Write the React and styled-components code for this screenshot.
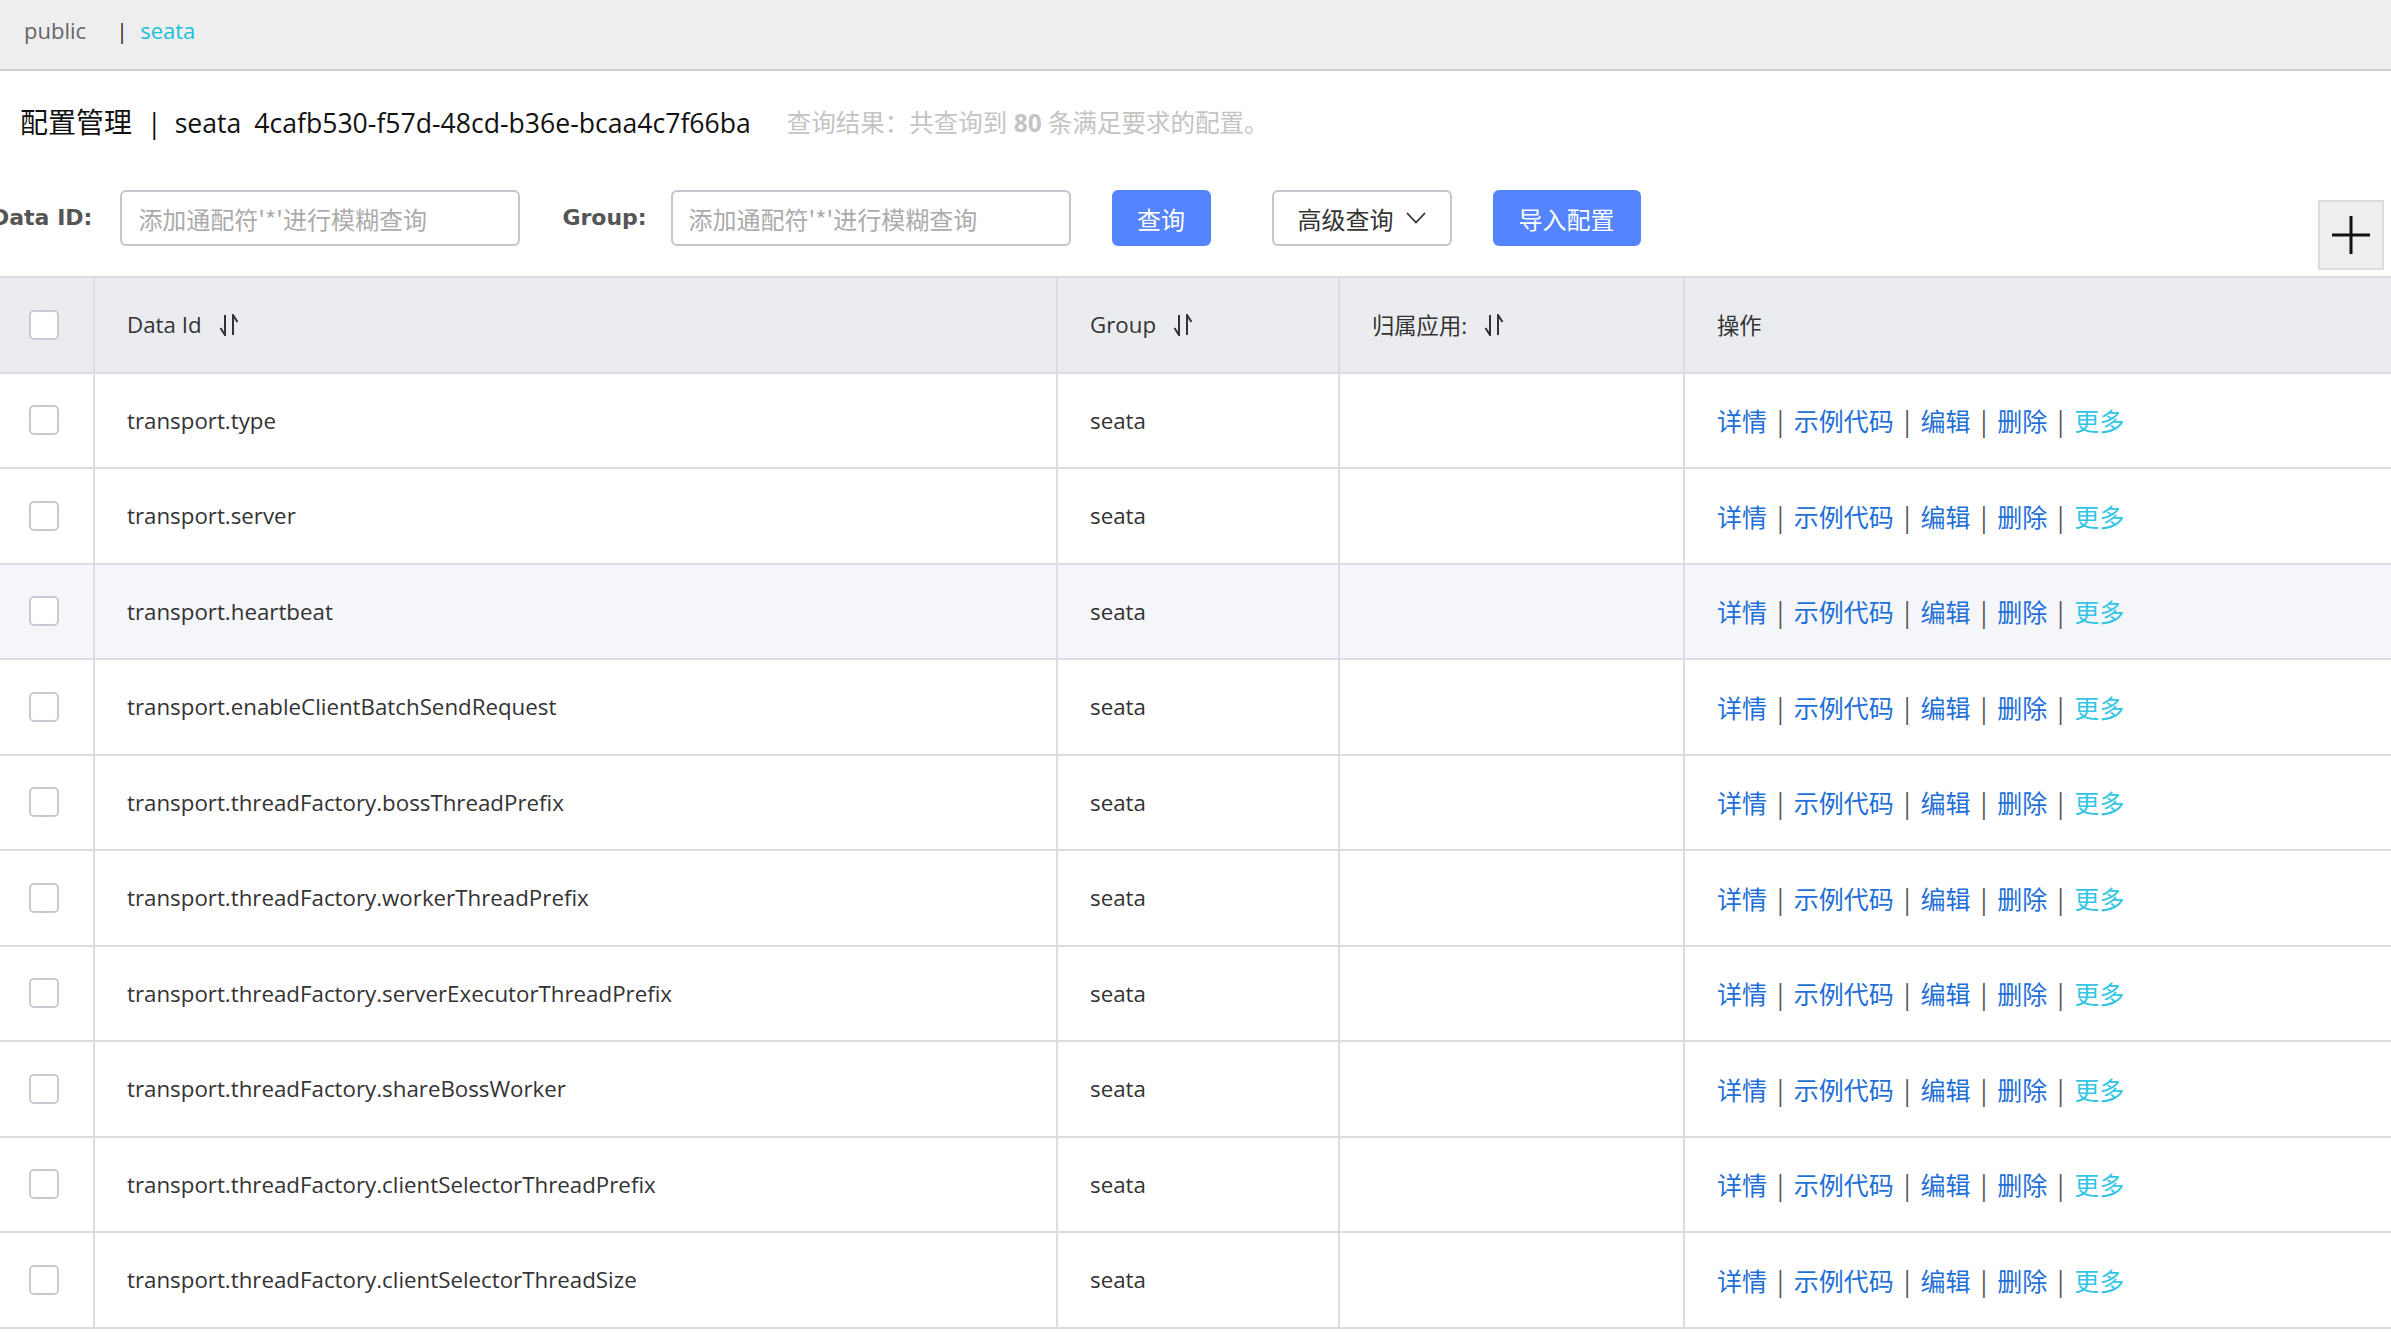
import React from 'react'
import styled, { createGlobalStyle } from 'styled-components'

const rows = [
  'transport.type',
  'transport.server',
  'transport.heartbeat',
  'transport.enableClientBatchSendRequest',
  'transport.threadFactory.bossThreadPrefix',
  'transport.threadFactory.workerThreadPrefix',
  'transport.threadFactory.serverExecutorThreadPrefix',
  'transport.threadFactory.shareBossWorker',
  'transport.threadFactory.clientSelectorThreadPrefix',
  'transport.threadFactory.clientSelectorThreadSize',
]

const actions = ['详情', '示例代码', '编辑', '删除', '更多']

function SortIcon() {
  return (
    <svg width="20" height="22" viewBox="0 0 20 22" fill="none" stroke="#333" strokeWidth="2">
      <path d="M6 1 V21 L1.5 14" />
      <path d="M14 21 V1 L18.5 8" />
    </svg>
  )
}

function App() {
  return (
    <Page>
      <GlobalStyle />
      <TopBar>
        <Crumb>public</Crumb>
        <Divider>|</Divider>
        <Crumb $active>seata</Crumb>
      </TopBar>

      <TitleRow>
        <Title>
          <TitleCn>配置管理</TitleCn>
          <TitleSep>|</TitleSep>seata<Uuid>4cafb530-f57d-48cd-b36e-bcaa4c7f66ba</Uuid>
        </Title>
        <Result>
          查询结果：共查询到 <strong>80</strong> 条满足要求的配置。
        </Result>
      </TitleRow>

      <SearchBar>
        <Label $first>Data ID:</Label>
        <Input placeholder="添加通配符'*'进行模糊查询" />
        <Label>Group:</Label>
        <Input placeholder="添加通配符'*'进行模糊查询" />
        <Button $primary $w={99}>查询</Button>
        <Button $w={180} $gap={61}>
          高级查询
          <svg width="20" height="12" viewBox="0 0 20 12" fill="none" stroke="#333" strokeWidth="1.8">
            <polyline points="1,1 10,10.5 19,1" />
          </svg>
        </Button>
        <Button $primary $w={148}>导入配置</Button>
        <AddButton>
          <svg width="42" height="42" viewBox="0 0 42 42" stroke="#111" strokeWidth="3">
            <line x1="21" y1="2" x2="21" y2="40" />
            <line x1="2" y1="21" x2="40" y2="21" />
          </svg>
        </AddButton>
      </SearchBar>

      <Table>
        <Row $head>
          <CheckCell><Checkbox /></CheckCell>
          <Cell>Data Id<SortIcon /></Cell>
          <Cell>Group<SortIcon /></Cell>
          <Cell>归属应用:<SortIcon /></Cell>
          <Cell $last>操作</Cell>
        </Row>
        {rows.map((id, i) => (
          <Row key={id} $hover={i === 2}>
            <CheckCell><Checkbox /></CheckCell>
            <Cell>{id}</Cell>
            <Cell>seata</Cell>
            <Cell />
            <Cell $last>
              <Actions>
                {actions.map((a, j) => (
                  <React.Fragment key={a}>
                    {j > 0 && <Sep>|</Sep>}
                    <Link $more={a === '更多'}>{a}</Link>
                  </React.Fragment>
                ))}
              </Actions>
            </Cell>
          </Row>
        ))}
      </Table>
    </Page>
  )
}

export default App

const GlobalStyle = createGlobalStyle`
  html, body {
    margin: 0;
    padding: 0;
    background: #fff;
    overflow: hidden;
  }
  * { box-sizing: border-box; }
`

const Page = styled.div`
  width: 2391px;
  height: 1332px;
  overflow: hidden;
  font-family: "Open Sans", "Noto Sans CJK SC", sans-serif;
  color: #333;
`

const TopBar = styled.div`
  height: 71px;
  background: #eeeeee;
  border-bottom: 2px solid #cfcfd1;
  display: flex;
  align-items: center;
  padding: 0 0 9px 24px;
  font-size: 22px;
`

const Crumb = styled.span`
  color: ${p => (p.$active ? '#1bc0da' : '#666')};
`

const Divider = styled.span`
  color: #333;
  margin: 0 12px 0 30px;
`

const TitleRow = styled.div`
  height: 100px;
  display: flex;
  align-items: center;
  padding-left: 20px;
`

const Title = styled.h1`
  margin: 0;
  font-weight: 400;
  font-size: 26.6px;
  color: #111;
`

const TitleCn = styled.span`
  font-size: 28px;
`

const TitleSep = styled.span`
  margin: 0 13px 0 15px;
`

const Uuid = styled.span`
  margin-left: 13px;
`

const Result = styled.span`
  margin-left: 36px;
  font-size: 24.5px;
  color: #c4c4c4;

  strong {
    font-weight: 700;
  }
`

const SearchBar = styled.div`
  height: 105px;
  display: flex;
  align-items: flex-start;
  padding-top: 19px;
`

const Label = styled.label`
  font-family: "DejaVu Sans", sans-serif;
  font-weight: 700;
  font-size: 22px;
  color: #555;
  line-height: 56px;
  white-space: nowrap;
  margin-left: ${p => (p.$first ? '-9px' : '42px')};
  margin-right: ${p => (p.$first ? '28px' : '24px')};
`

const Input = styled.input`
  width: 400px;
  height: 56px;
  border: 2px solid #c4c6cf;
  border-radius: 6px;
  padding: 0 16px;
  font-family: "Noto Sans CJK SC", sans-serif;
  font-size: 24px;
  outline: none;

  &::placeholder {
    color: #ababab;
  }
`

const Button = styled.button`
  width: ${p => p.$w}px;
  height: 56px;
  margin-left: ${p => p.$gap || 41}px;
  border-radius: 6px;
  border: 2px solid ${p => (p.$primary ? '#5584ff' : '#c4c6cf')};
  background: ${p => (p.$primary ? '#5584ff' : '#fff')};
  color: ${p => (p.$primary ? '#fff' : '#333')};
  font-family: "Noto Sans CJK SC", sans-serif;
  font-size: 24px;
  display: flex;
  align-items: center;
  justify-content: center;
  gap: 12px;
  padding: 0;
`

const AddButton = styled.div`
  margin-left: auto;
  margin-right: 7px;
  margin-top: 10px;
  width: 66px;
  height: 70px;
  background: #eeeeee;
  border: 2px solid #dcdcdc;
  display: flex;
  align-items: center;
  justify-content: center;
`

const Table = styled.div`
  border-top: 2px solid #dcdde2;
`

const Row = styled.div`
  display: grid;
  grid-template-columns: 95px 963px 282px 345px 1fr;
  height: 95.5px;
  border-bottom: 2px solid #dcdde2;
  background: ${p => (p.$head ? '#ebecf0' : p.$hover ? '#f5f6f9' : '#fff')};
  font-size: 22.3px;
  color: #333;
`

const Cell = styled.div`
  display: flex;
  align-items: center;
  gap: 17px;
  padding-left: 32px;
  border-right: ${p => (p.$last ? 'none' : '2px solid #dcdde2')};
  white-space: nowrap;
`

const CheckCell = styled(Cell)`
  padding-left: 29px;
`

const Checkbox = styled.span`
  width: 30px;
  height: 30px;
  border: 2px solid #c8cad2;
  border-radius: 5px;
  background: #fff;
`

const Actions = styled.span`
  display: inline-flex;
  align-items: center;
  font-family: "Noto Sans CJK SC", sans-serif;
  font-size: 25px;
`

const Link = styled.span`
  color: ${p => (p.$more ? '#33c6e4' : '#1f6fd8')};
`

const Sep = styled.span`
  color: #555;
  margin: 0 10px;
`
